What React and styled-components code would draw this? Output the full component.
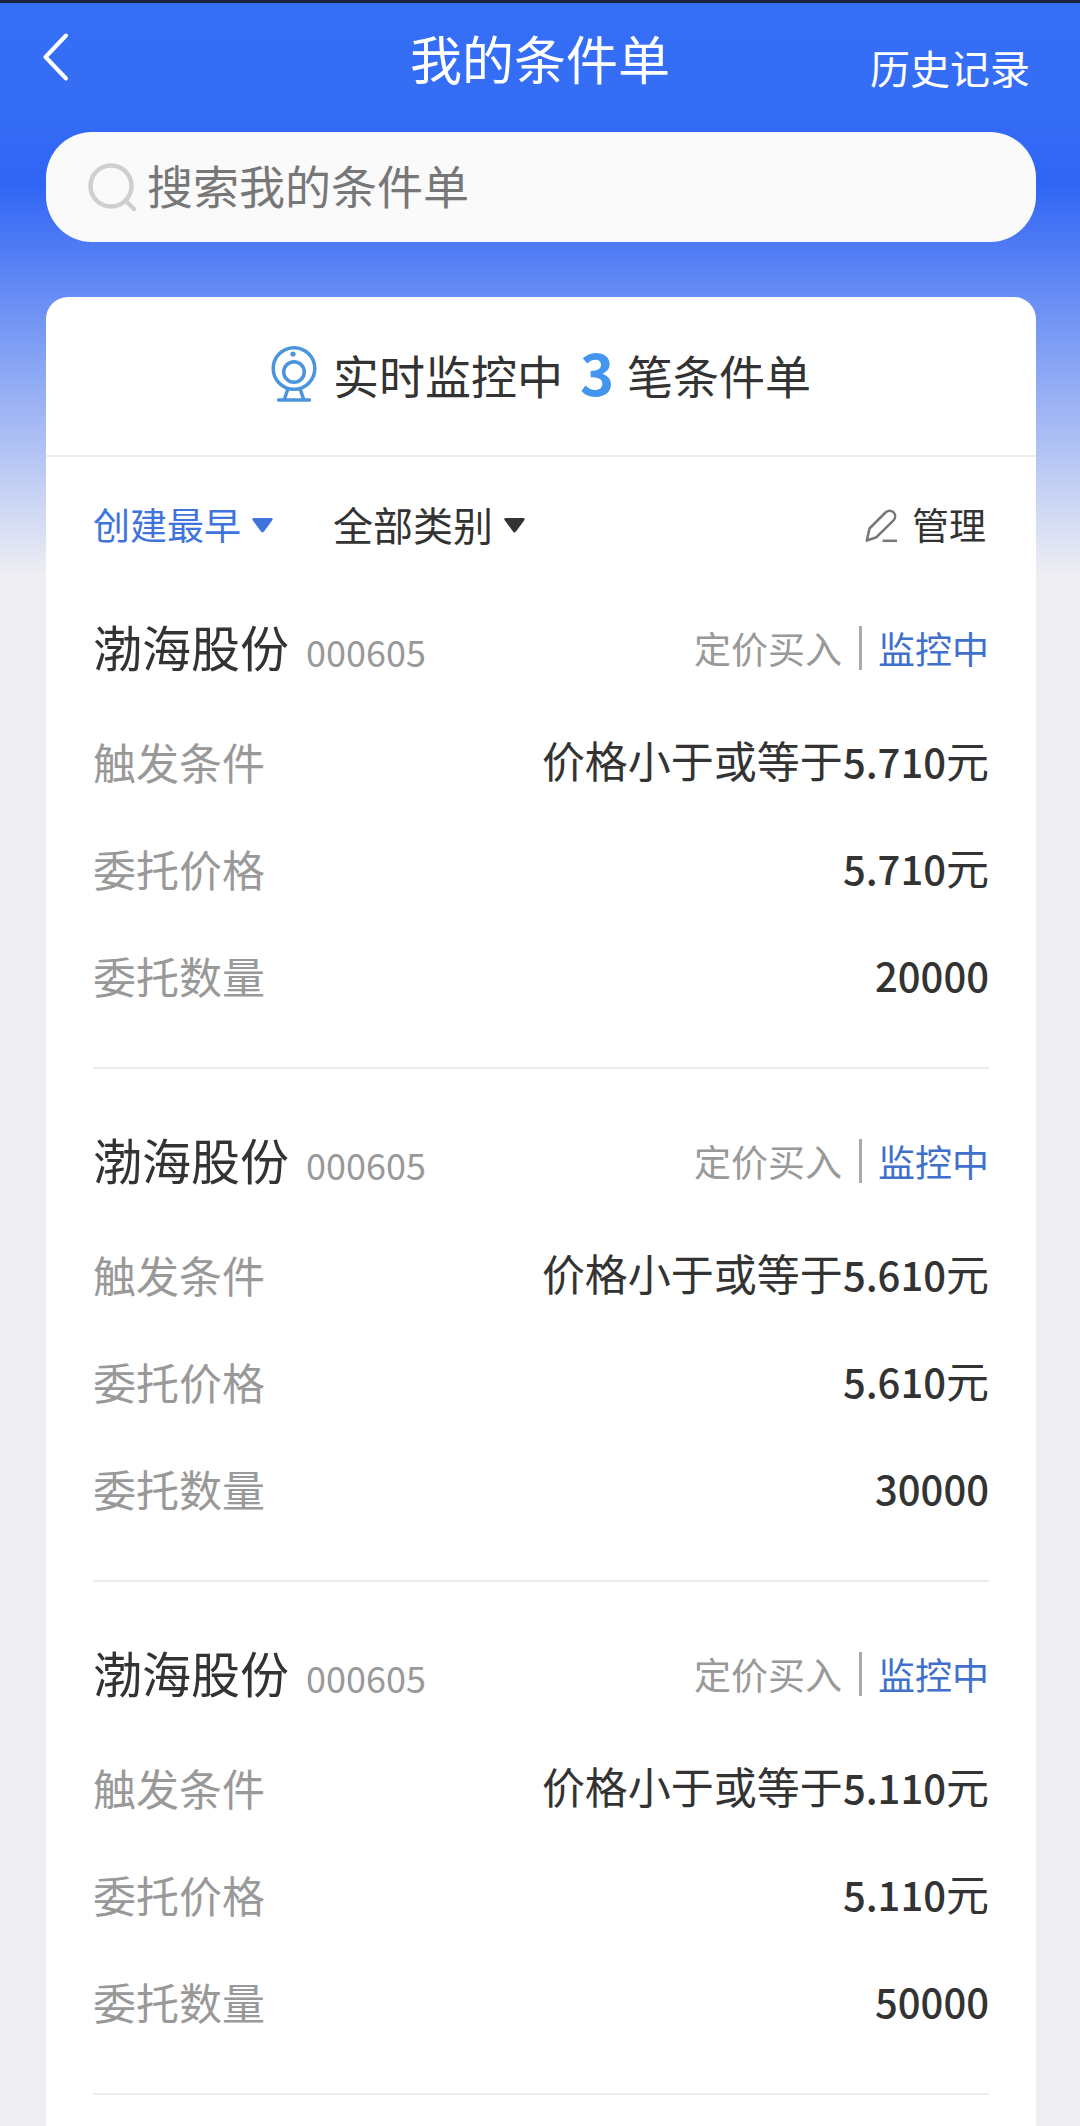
import React, { useState } from 'react';
import styled, { createGlobalStyle } from 'styled-components';

const GlobalStyle = createGlobalStyle`
  * {
    box-sizing: border-box;
    margin: 0;
    padding: 0;
  }
  body {
    background: #eeeef3;
    color: #333;
    font-family: 'Noto Sans CJK SC', 'Noto Sans', sans-serif;
  }
  button,
  input,
  select {
    font-family: inherit;
    color: inherit;
    background: none;
    border: 0;
    outline: 0;
  }
`;

const Page = styled.div`
  display: flex;
  flex-direction: column;
  min-height: 100vh;
  border-top: 3px solid #1b2440;
  background: linear-gradient(
      to bottom,
      #356ff6 0,
      #356df5 100px,
      #3065f5 180px,
      #eeeef3 572px
    )
    no-repeat;
`;

const Header = styled.header`
  display: grid;
  grid-template-columns: 1fr auto 1fr;
  align-items: start;
  height: 129px;
  padding: 0 42px;
  color: #fff;
`;

const BackButton = styled.button`
  display: flex;
  justify-self: start;
  padding: 28px 0;
`;

const Title = styled.h1`
  font-size: 52px;
  font-weight: 400;
  line-height: 110px;
`;

const HistoryLink = styled.a`
  justify-self: end;
  padding-right: 8px;
  color: inherit;
  font-size: 40px;
  line-height: 128px;
  text-decoration: none;
`;

const SearchBox = styled.label`
  display: flex;
  align-items: center;
  gap: 10px;
  height: 110px;
  margin: 0 44px 55px 46px;
  padding: 0 42px;
  border-radius: 46px;
  background: #fafafb;
`;

const SearchInput = styled.input`
  flex: 1;
  min-width: 0;
  padding-bottom: 6px;
  font-size: 46px;
  line-height: 64px;
  &::placeholder {
    color: #777;
    opacity: 1;
  }
`;

const Card = styled.main`
  flex: 1;
  margin: 0 44px 0 46px;
  border-radius: 22px 22px 0 0;
  background: #fff;
`;

const Summary = styled.div`
  display: flex;
  align-items: center;
  justify-content: center;
  height: 160px;
  padding-bottom: 5px;
  border-bottom: 2px solid #ededed;
  font-size: 46px;
  svg {
    margin-right: 16px;
  }
`;

const Count = styled.strong`
  margin: 0 13px 6px 17px;
  color: #4395ee;
  font-size: 58px;
  font-weight: 700;
  line-height: 60px;
`;

const Toolbar = styled.div`
  display: flex;
  align-items: center;
  height: 99px;
  padding: 38px 50px 0 47px;
`;

const Filter = styled.label`
  display: flex;
  align-items: center;
  gap: 11px;
  margin-right: 60px;
  color: ${({ $active }) => ($active ? '#3f74dc' : '#333')};
  select {
    appearance: none;
    padding-bottom: 4px;
    font-size: ${({ $active }) => ($active ? 37 : 40)}px;
    line-height: 60px;
  }
`;

const ManageButton = styled.button`
  display: flex;
  align-items: center;
  gap: 14px;
  margin-left: auto;
  font-size: 37px;
  line-height: 60px;
  span {
    padding-bottom: 4px;
  }
`;

const OrderList = styled.ul`
  margin: 0 47px;
  list-style: none;
`;

const Order = styled.li`
  padding: 59px 0 39px;
  border-bottom: 2px solid #ededed;
`;

const OrderHead = styled.div`
  display: flex;
  align-items: center;
  height: 66px;
  margin-bottom: 26px;
`;

const StockName = styled.h2`
  padding-bottom: 4px;
  font-size: 49px;
  font-weight: 400;
  line-height: 62px;
`;

const StockCode = styled.span`
  margin-left: 17px;
  padding-top: 6px;
  color: #999;
  font-size: 36px;
  line-height: 60px;
`;

const OrderType = styled.span`
  margin-left: auto;
  color: #999;
  font-size: 37px;
`;

const Status = styled.span`
  margin-left: 17px;
  padding-left: 16px;
  border-left: 3px solid #aaa;
  color: #3f70cc;
  font-size: 37px;
  line-height: 44px;
`;

const Field = styled.div`
  display: flex;
  align-items: center;
  justify-content: space-between;
  height: 107px;
  font-size: 43px;
  dt {
    color: #999;
  }
  dd {
    padding-bottom: 4px;
  }
`;

const Num = styled.span`
  font-size: 40px;
  font-weight: 500;
`;

const orders = [
  { id: 1, price: '5.710', amount: '20000' },
  { id: 2, price: '5.610', amount: '30000' },
  { id: 3, price: '5.110', amount: '50000' },
];

const BackIcon = () => (
  <svg width="28" height="52" viewBox="0 0 28 52" fill="none" stroke="#fff" strokeWidth="4" strokeLinecap="round" strokeLinejoin="round">
    <path d="M24 4.500L3.500 26L24 47.500" />
  </svg>
);

const SearchIcon = () => (
  <svg width="49" height="50" viewBox="0 0 49 50" fill="none" stroke="#cfcfcf" strokeWidth="4.500" strokeLinecap="round">
    <circle cx="23" cy="24" r="20.500" />
    <path d="M38 39L46 47" />
  </svg>
);

const CameraIcon = () => (
  <svg width="46" height="58" viewBox="0 0 46 58" fill="none" stroke="#4a95dc" strokeWidth="3.500" strokeLinecap="round">
    <circle cx="23" cy="23.500" r="20.800" />
    <circle cx="23" cy="27" r="10.300" />
    <circle cx="22" cy="9" r="2.600" fill="#4a95dc" stroke="none" />
    <path d="M16.500 45L13.500 54M29.500 45L32.500 54M7.500 55H38.500" />
  </svg>
);

const PenIcon = () => (
  <svg width="33" height="34" viewBox="0 0 33 34" fill="none" stroke="#777" strokeWidth="2.500" strokeLinejoin="round">
    <path d="M4.500 19.500L20.500 3.500C22.500 1.200 26 1 28.300 3.200C30.800 5.600 30.700 9 28.500 11.300L11.500 28.200L1.800 31.500Z" />
    <path d="M17.500 31.800H32" />
  </svg>
);

const Caret = () => (
  <svg width="21" height="15" viewBox="0 0 21 15" fill="currentColor">
    <path d="M1.500 0H19.500Q21.500 0.500 20.300 2.300L12 13.500Q10.500 15.500 9 13.500L0.700 2.300Q-0.500 0.500 1.500 0Z" />
  </svg>
);

function OrderItem({ price, amount }) {
  return (
    <Order>
      <OrderHead>
        <StockName>渤海股份</StockName>
        <StockCode>000605</StockCode>
        <OrderType>定价买入</OrderType>
        <Status>监控中</Status>
      </OrderHead>
      <dl>
        <Field>
          <dt>触发条件</dt>
          <dd>
            价格小于或等于<Num>{price}</Num>元
          </dd>
        </Field>
        <Field>
          <dt>委托价格</dt>
          <dd>
            <Num>{price}</Num>元
          </dd>
        </Field>
        <Field>
          <dt>委托数量</dt>
          <dd>
            <Num>{amount}</Num>
          </dd>
        </Field>
      </dl>
    </Order>
  );
}

export default function App() {
  const [keyword, setKeyword] = useState('');

  return (
    <>
      <GlobalStyle />
      <Page>
        <Header>
          <BackButton type="button" aria-label="返回">
            <BackIcon />
          </BackButton>
          <Title>我的条件单</Title>
          <HistoryLink href="#history">历史记录</HistoryLink>
        </Header>
        <SearchBox>
          <SearchIcon />
          <SearchInput
            type="text"
            aria-label="搜索我的条件单"
            placeholder="搜索我的条件单"
            value={keyword}
            onChange={(e) => setKeyword(e.target.value)}
          />
        </SearchBox>
        <Card>
          <Summary>
            <CameraIcon />
            <span>实时监控中</span>
            <Count>3</Count>
            <span>笔条件单</span>
          </Summary>
          <Toolbar>
            <Filter $active>
              <select aria-label="排序">
                <option>创建最早</option>
              </select>
              <Caret />
            </Filter>
            <Filter>
              <select aria-label="类别">
                <option>全部类别</option>
              </select>
              <Caret />
            </Filter>
            <ManageButton type="button">
              <PenIcon />
              <span>管理</span>
            </ManageButton>
          </Toolbar>
          <OrderList>
            {orders.map((order) => (
              <OrderItem key={order.id} price={order.price} amount={order.amount} />
            ))}
          </OrderList>
        </Card>
      </Page>
    </>
  );
}
